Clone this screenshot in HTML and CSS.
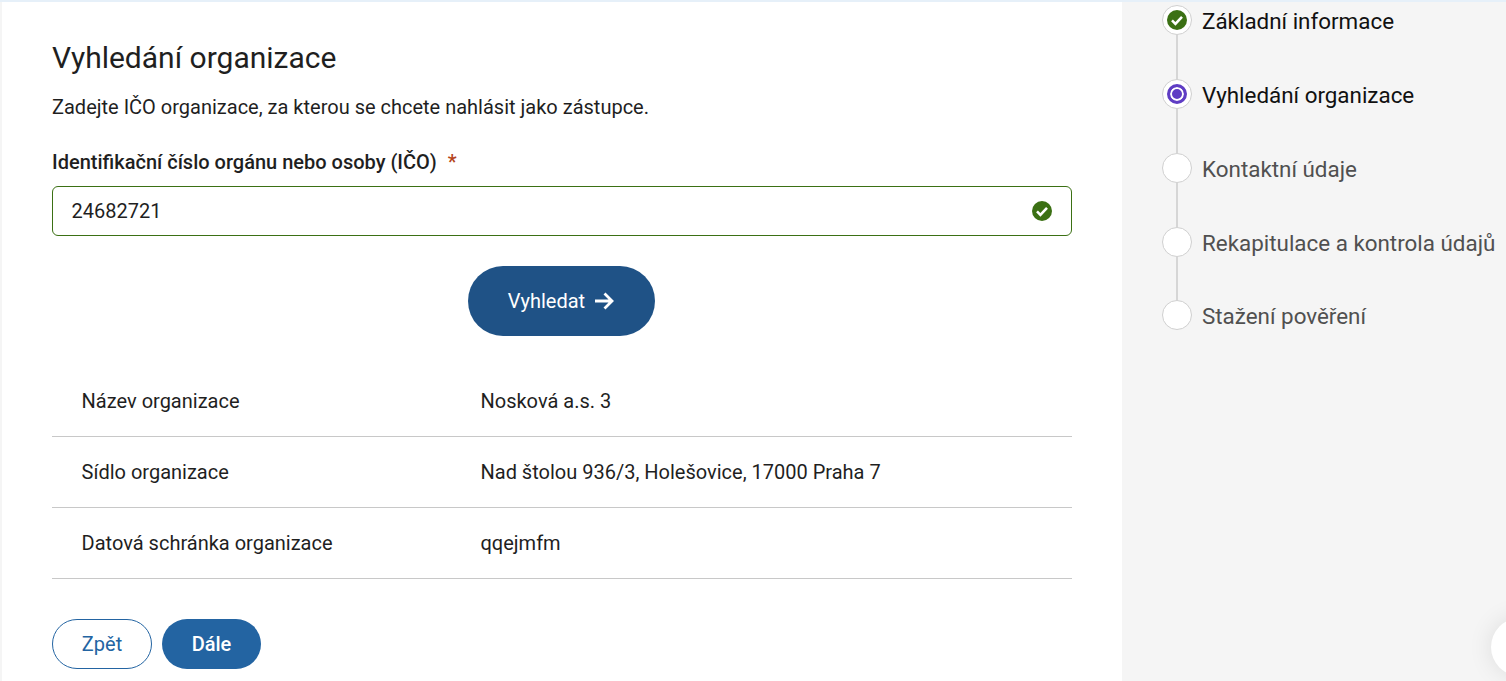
FILE: index.html
```html
<!DOCTYPE html>
<html lang="cs">
<head>
	<meta charset="utf-8">
	<title>Vyhledání organizace</title>
	<link rel="stylesheet" href="styles.css">
</head>
<body>
	<div class="page">
		<!-- main form -->
		<div class="content">
			<h1 class="title">Vyhledání organizace</h1>
			<p class="intro">Zadejte IČO organizace, za kterou se chcete nahlásit jako zástupce.</p>

			<label class="field-label" for="ico">Identifikační číslo orgánu nebo osoby (IČO) <span class="required">*</span></label>
			<div class="field">
				<input class="field-input" id="ico" type="text" value="24682721">
				<svg class="field-icon" viewBox="0 0 20 20" width="20" height="20">
					<circle cx="10" cy="10" r="10" fill="#3b7014"/>
					<path d="M5 10.4l3.4 3.4 6.6-7" fill="none" stroke="#fff" stroke-width="2.6"/>
				</svg>
			</div>

			<div class="search-row">
				<button class="btn-search" type="button">Vyhledat
					<svg viewBox="0 0 20 20" width="20" height="20">
						<path d="M0 10h16.5M9.5 2.5l7.5 7.5-7.5 7.5" fill="none" stroke="#fff" stroke-width="2.8"/>
					</svg>
				</button>
			</div>

			<div class="info-table">
				<div class="info-row"><span class="info-name">Název organizace</span><span>Nosková a.s. 3</span></div>
				<div class="info-row"><span class="info-name">Sídlo organizace</span><span>Nad štolou 936/3, Holešovice, 17000 Praha 7</span></div>
				<div class="info-row"><span class="info-name">Datová schránka organizace</span><span>qqejmfm</span></div>
			</div>

			<div class="actions">
				<button class="btn btn-back" type="button">Zpět</button>
				<button class="btn btn-next" type="button">Dále</button>
			</div>
		</div>

		<!-- step list -->
		<div class="sidebar">
			<ul class="steps">
				<li class="step done">
					<span class="step-mark">
						<svg viewBox="0 0 20 20" width="20" height="20">
							<circle cx="10" cy="10" r="10" fill="#3b7014"/>
							<path d="M5 10.4l3.4 3.4 6.6-7" fill="none" stroke="#fff" stroke-width="2.6"/>
						</svg>
					</span>
					Základní informace
				</li>
				<li class="step current">
					<span class="step-mark"><span class="step-dot"></span></span>
					Vyhledání organizace
				</li>
				<li class="step"><span class="step-mark"></span>Kontaktní údaje</li>
				<li class="step"><span class="step-mark"></span>Rekapitulace a kontrola údajů</li>
				<li class="step"><span class="step-mark"></span>Stažení pověření</li>
			</ul>
		</div>
	</div>
	<div class="float-btn"></div>
</body>
</html>
```

FILE: styles.css
```css
html, body {
	margin: 0;
	height: 681px;
	overflow: hidden;
}

body {
	font-family: Roboto, "Liberation Sans", sans-serif;
	color: #1f1f1f;
	background-color: #f5f5f5;
	position: relative;
}

.page {
	display: flex;
	height: 679px;
	border-top: 2px solid #e6f0f9;
}

/* main form */
.content {
	width: 1020px;
	margin-left: 2px;
	padding: 0 50px;
	background-color: #fff;
}

.title {
	margin: 37px 0 0;
	font-size: 30px;
	line-height: 38px;
	font-weight: 400;
}

.intro {
	margin: 17px 0 0;
	font-size: 20px;
	line-height: 26px;
}

.field-label {
	display: block;
	margin-top: 30px;
	font-size: 20px;
	line-height: 24px;
	font-weight: 500;
}

.required {
	color: #b5451b;
	margin-left: 6px;
}

.field {
	position: relative;
	margin-top: 12px;
}

.field-input {
	display: block;
	box-sizing: border-box;
	width: 100%;
	height: 50px;
	padding: 0 50px 0 18.5px;
	border: 1px solid #3b7014;
	border-radius: 6px;
	font-family: inherit;
	font-size: 20px;
	color: #1f1f1f;
}

.field-icon {
	position: absolute;
	right: 20px;
	top: 15px;
}

.search-row {
	display: flex;
	justify-content: center;
	margin-top: 30px;
}

.btn-search {
	display: flex;
	align-items: center;
	justify-content: center;
	gap: 10px;
	width: 187px;
	height: 70px;
	margin-right: 1px;
	border: none;
	border-radius: 35px;
	background-color: #1f5286;
	color: #fff;
	font-family: inherit;
	font-size: 20px;
}

.info-table {
	margin-top: 30px;
}

.info-row {
	display: flex;
	align-items: center;
	height: 70px;
	padding-left: 29.6px;
	border-bottom: 1px solid #c8c8c8;
	font-size: 20px;
}

.info-name {
	width: 398.9px;
}

.actions {
	display: flex;
	gap: 10px;
	margin-top: 40px;
}

.btn {
	box-sizing: border-box;
	height: 50px;
	border-radius: 25px;
	font-family: inherit;
	font-size: 20px;
}

.btn-back {
	width: 100px;
	border: 1px solid #2364a2;
	background-color: #fff;
	color: #2364a2;
}

.btn-next {
	width: 99px;
	border: none;
	background-color: #2364a2;
	color: #fff;
	font-weight: 500;
}

/* step list */
.sidebar {
	flex: 1;
	padding: 3.2px 0 0 40px;
}

.steps {
	list-style: none;
	margin: 0;
	padding: 0;
}

.step {
	position: relative;
	display: flex;
	align-items: flex-start;
	gap: 10px;
	height: 73.8px;
	font-size: 22.4px;
	line-height: 33px;
	color: #505050;
	white-space: nowrap;
}

.step.done,
.step.current {
	color: #111;
}

.step::after {
	content: "";
	position: absolute;
	left: 14px;
	top: 30px;
	width: 2px;
	height: 44px;
	background-color: #d6d6d6;
}

.step:last-child::after {
	display: none;
}

.step-mark {
	box-sizing: border-box;
	flex: none;
	display: flex;
	align-items: center;
	justify-content: center;
	width: 30px;
	height: 30px;
	border: 1px solid #d0d0d0;
	border-radius: 50%;
	background-color: #fff;
}

.step-dot {
	box-sizing: border-box;
	width: 20px;
	height: 20px;
	border: 3px solid #5f3dc4;
	border-radius: 50%;
	background-color: #5f3dc4;
	box-shadow: inset 0 0 0 2px #fff;
}

/* round button cut by the right edge */
.float-btn {
	position: absolute;
	left: 1491px;
	top: 618px;
	width: 58px;
	height: 58px;
	border-radius: 50%;
	background-color: #fff;
	box-shadow: 0 0 24px rgba(0, 0, 0, 0.1);
}
```
